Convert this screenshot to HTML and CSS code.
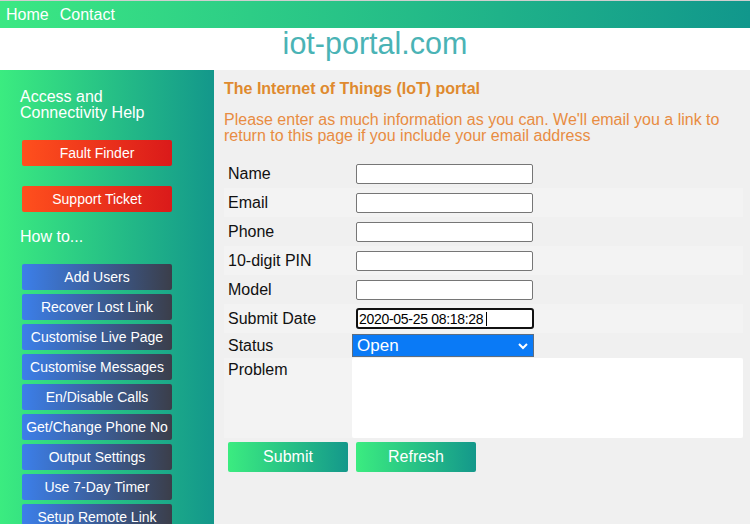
FILE: index.html
```html
<!DOCTYPE html>
<html lang="en">
<head>
    <meta charset="UTF-8">
    <title>iot-portal.com</title>
    <link rel="stylesheet" href="styles.css">
</head>
<body>
    <nav class="topnav">
        <a href="#">Home</a>
        <a href="#">Contact</a>
    </nav>
    <header class="site-header">iot-portal.com</header>

    <div class="page">
        <aside class="sidebar">
            <h3>Access and<br>Connectivity Help</h3>
            <button class="side-btn red">Fault Finder</button>
            <button class="side-btn red">Support Ticket</button>
            <h3 class="howto">How to...</h3>
            <div class="howto-list">
                <button class="side-btn blue">Add Users</button>
                <button class="side-btn blue">Recover Lost Link</button>
                <button class="side-btn blue">Customise Live Page</button>
                <button class="side-btn blue">Customise Messages</button>
                <button class="side-btn blue">En/Disable Calls</button>
                <button class="side-btn blue">Get/Change Phone No</button>
                <button class="side-btn blue">Output Settings</button>
                <button class="side-btn blue">Use 7-Day Timer</button>
                <button class="side-btn blue">Setup Remote Link</button>
            </div>
        </aside>

        <main class="content">
            <h2 class="portal-title">The Internet of Things (IoT) portal</h2>
            <p class="intro">Please enter as much information as you can. We'll email you a link to return to this page if you include your email address</p>

            <table class="ticket-form">
                <tr><td class="lbl">Name</td><td><input type="text" class="field"></td></tr>
                <tr><td class="lbl">Email</td><td><input type="text" class="field"></td></tr>
                <tr><td class="lbl">Phone</td><td><input type="text" class="field"></td></tr>
                <tr><td class="lbl">10-digit PIN</td><td><input type="text" class="field"></td></tr>
                <tr><td class="lbl">Model</td><td><input type="text" class="field"></td></tr>
                <tr class="date-row">
                    <td class="lbl">Submit Date</td>
                    <td><span class="caret-wrap"><input type="text" class="field date" value="2020-05-25 08:18:28"></span></td>
                </tr>
                <tr class="status-row">
                    <td class="lbl">Status</td>
                    <td>
                        <div class="status">
                            <span>Open</span>
                            <svg width="12" height="8" viewBox="0 0 12 8"><path d="M2 2 L6 6 L10 2" fill="none" stroke="#fff" stroke-width="2"/></svg>
                        </div>
                    </td>
                </tr>
                <tr class="problem-row"><td class="lbl">Problem</td><td><textarea class="problem"></textarea></td></tr>
                <tr class="btn-row">
                    <td class="lbl"><button class="go-btn">Submit</button></td>
                    <td><button class="go-btn refresh">Refresh</button></td>
                </tr>
            </table>
        </main>
    </div>
</body>
</html>
```

FILE: styles.css
```css
body {
    margin: 0;
    font-family: "Liberation Sans", Arial, sans-serif;
    background: #f0f0f0;
    min-height: 524px;
}

.topnav {
    height: 27px;
    border-top: 1px solid #cfcfcf;
    background: linear-gradient(90deg, #3be883, #11978c);
    display: flex;
    align-items: center;
    gap: 11px;
    padding-left: 6px;
}

.topnav a {
    color: #fff;
    text-decoration: none;
    font-size: 16px;
}

.site-header {
    background: #fff;
    height: 42px;
    text-align: center;
    font-size: 30.5px;
    line-height: 31px;
    color: #4ab3b5;
}

.page {
    display: flex;
    min-height: 454px;
}

.sidebar {
    width: 214px;
    flex-shrink: 0;
    background: linear-gradient(90deg, #3bec80, #13978b);
    padding: 19px 0 0 0;
}

.sidebar h3 {
    margin: 0 0 19px 20px;
    font-size: 16px;
    font-weight: normal;
    line-height: 16px;
    color: #fff;
}

.side-btn {
    display: block;
    width: 150px;
    height: 26px;
    margin-left: 22px;
    padding: 0;
    border: none;
    border-radius: 2px;
    color: #fff;
    font-family: "Liberation Sans", Arial, sans-serif;
    font-size: 14px;
    cursor: pointer;
}

.side-btn.red {
    background: linear-gradient(90deg, #ff501d, #da1a1a);
    margin-bottom: 20px;
}

.side-btn.red + h3.howto {
    margin-top: -3px;
}

.side-btn.blue {
    background: linear-gradient(90deg, #3c7fea, #3b3e4a);
    margin-bottom: 4px;
}

.content {
    flex: 1;
    padding: 10px 7px 0 10px;
}

.portal-title {
    margin: 0;
    font-size: 16px;
    line-height: 18px;
    color: #df8a2e;
}

.intro {
    margin: 14px 0 0 0;
    font-size: 16px;
    line-height: 16px;
    color: #e88c42;
}

.ticket-form {
    margin-top: 15px;
    width: 100%;
    border-collapse: collapse;
    font-size: 16px;
    color: #111;
}

.ticket-form td {
    height: 29px;
    padding: 0;
    vertical-align: middle;
}

.ticket-form tr:nth-child(even) {
    background: #f3f3f3;
}

.ticket-form td.lbl {
    width: 124px;
    padding-left: 4px;
}

.field {
    display: block;
    box-sizing: border-box;
    width: 177px;
    height: 20px;
    margin-left: 4px;
    border: 1px solid #767676;
    border-radius: 2px;
    background: #fff;
    padding: 0 2px;
    font-family: "Liberation Sans", Arial, sans-serif;
}

.caret-wrap {
    display: block;
    position: relative;
}

.caret-wrap::after {
    content: "";
    position: absolute;
    left: 134px;
    top: 4px;
    width: 1px;
    height: 14px;
    background: #000;
}

.field.date {
    height: 21px;
    width: 178px;
    border: 2px solid #111;
    border-radius: 3px;
    font-size: 14px;
    letter-spacing: -0.3px;
    color: #000;
    padding: 0 1px;
}

.status-row td {
    height: 25px;
}

.status {
    width: 182px;
    height: 23px;
    box-sizing: border-box;
    background: #0a7af6;
    border: 1px solid #5e6e80;
    color: #fff;
    font-size: 17px;
    display: flex;
    align-items: center;
    justify-content: space-between;
    padding: 0 4px 0 4px;
}

.problem-row td {
    height: 80px;
    vertical-align: top;
}

.problem-row td.lbl {
    height: 77px;
    padding-top: 3px;
}

.problem {
    display: block;
    width: 100%;
    height: 80px;
    box-sizing: border-box;
    border: none;
    border-radius: 2px;
    background: #fff;
    resize: none;
}

.btn-row td {
    height: 30px;
    padding-top: 4px;
    vertical-align: top;
}

.go-btn {
    width: 120px;
    height: 30px;
    border: none;
    border-radius: 2px;
    background: linear-gradient(90deg, #3bec80, #14988b);
    color: #fff;
    font-family: "Liberation Sans", Arial, sans-serif;
    font-size: 16px;
    cursor: pointer;
}

.go-btn.refresh {
    margin-left: 4px;
}
```
